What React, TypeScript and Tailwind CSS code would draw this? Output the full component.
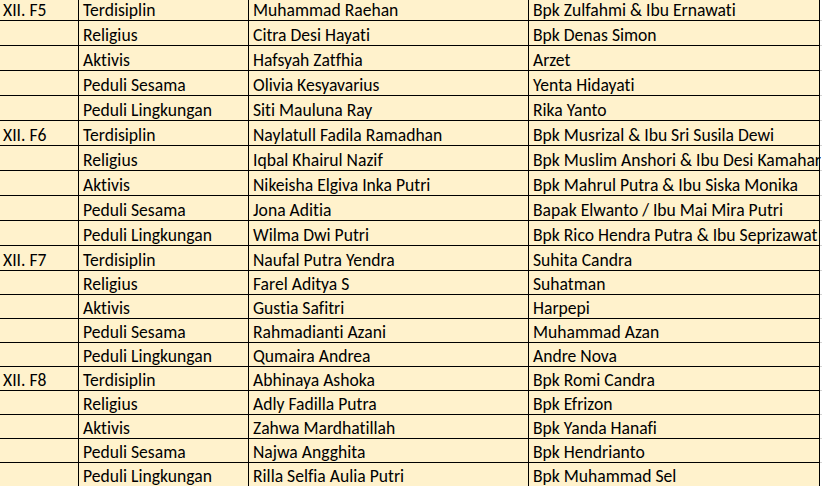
import React from "react";

const rows: [string, string, string, string][] = [
  ["XII. F5", "Terdisiplin", "Muhammad Raehan", "Bpk Zulfahmi & Ibu Ernawati"],
  ["", "Religius", "Citra Desi Hayati", "Bpk Denas Simon"],
  ["", "Aktivis", "Hafsyah Zatfhia", "Arzet"],
  ["", "Peduli Sesama", "Olivia Kesyavarius", "Yenta Hidayati"],
  ["", "Peduli Lingkungan", "Siti Mauluna Ray", "Rika Yanto"],
  ["XII. F6", "Terdisiplin", "Naylatull Fadila Ramadhan", "Bpk Musrizal & Ibu Sri Susila Dewi"],
  ["", "Religius", "Iqbal Khairul Nazif", "Bpk Muslim Anshori & Ibu Desi Kamahar"],
  ["", "Aktivis", "Nikeisha Elgiva Inka Putri", "Bpk Mahrul Putra & Ibu Siska Monika"],
  ["", "Peduli Sesama", "Jona Aditia", "Bapak Elwanto / Ibu Mai Mira Putri"],
  ["", "Peduli Lingkungan", "Wilma Dwi Putri", "Bpk Rico Hendra Putra & Ibu Seprizawat"],
  ["XII. F7", "Terdisiplin", "Naufal Putra Yendra", "Suhita Candra"],
  ["", "Religius", "Farel Aditya S", "Suhatman"],
  ["", "Aktivis", "Gustia Safitri", "Harpepi"],
  ["", "Peduli Sesama", "Rahmadianti Azani", "Muhammad Azan"],
  ["", "Peduli Lingkungan", "Qumaira Andrea", "Andre Nova"],
  ["XII. F8", "Terdisiplin", "Abhinaya Ashoka", "Bpk Romi Candra"],
  ["", "Religius", "Adly Fadilla Putra", "Bpk Efrizon"],
  ["", "Aktivis", "Zahwa Mardhatillah", "Bpk Yanda Hanafi"],
  ["", "Peduli Sesama", "Najwa Angghita", "Bpk Hendrianto"],
  ["", "Peduli Lingkungan", "Rilla Selfia Aulia Putri", "Bpk Muhammad Sel"],
];

const heights = [
  "h-[21px]", "h-[25px]", "h-[25px]", "h-[25px]", "h-[25px]", "h-[25px]", "h-[25px]",
  "h-[25px]", "h-[25px]", "h-[25px]", "h-[25px]", "h-[24px]", "h-[24px]", "h-[24px]",
  "h-[24px]", "h-[24px]", "h-[24px]", "h-[24px]", "h-[24px]", "h-[24px]",
];

export default function App() {
  return (
    <div
      className="w-[822px] h-[486px] overflow-hidden bg-white text-black [font-variant-ligatures:none]"
      style={{ fontFamily: "Carlito, Calibri, Lato, 'Liberation Sans', sans-serif" }}
    >
      {rows.map((r, i) => (
        <div key={i} className={`flex ${heights[i]} text-[17.6px] leading-[18px]`}>
          <div className="w-[79px] shrink-0 bg-[#fff2cc] border-r border-b border-black flex items-end pl-[3px] pb-[1px] whitespace-nowrap">
            {r[0]}
          </div>
          <div className="w-[170px] shrink-0 bg-[#fff2cc] border-r border-b border-black flex items-end pl-[4px] pb-[1px] whitespace-nowrap">
            {r[1]}
          </div>
          <div className="w-[280px] shrink-0 bg-[#fff2cc] border-r border-b border-black flex items-end pl-[4px] pb-[1px] whitespace-nowrap">
            {r[2]}
          </div>
          <div className="relative w-[291px] shrink-0 bg-[#fff2cc] border-r border-b border-black flex items-end pl-[4px] pb-[1px] whitespace-nowrap">
            <span className="relative z-10">{r[3]}</span>
          </div>
          <div className="flex-1 border-b border-[#d4d4d4]" />
        </div>
      ))}
    </div>
  );
}
